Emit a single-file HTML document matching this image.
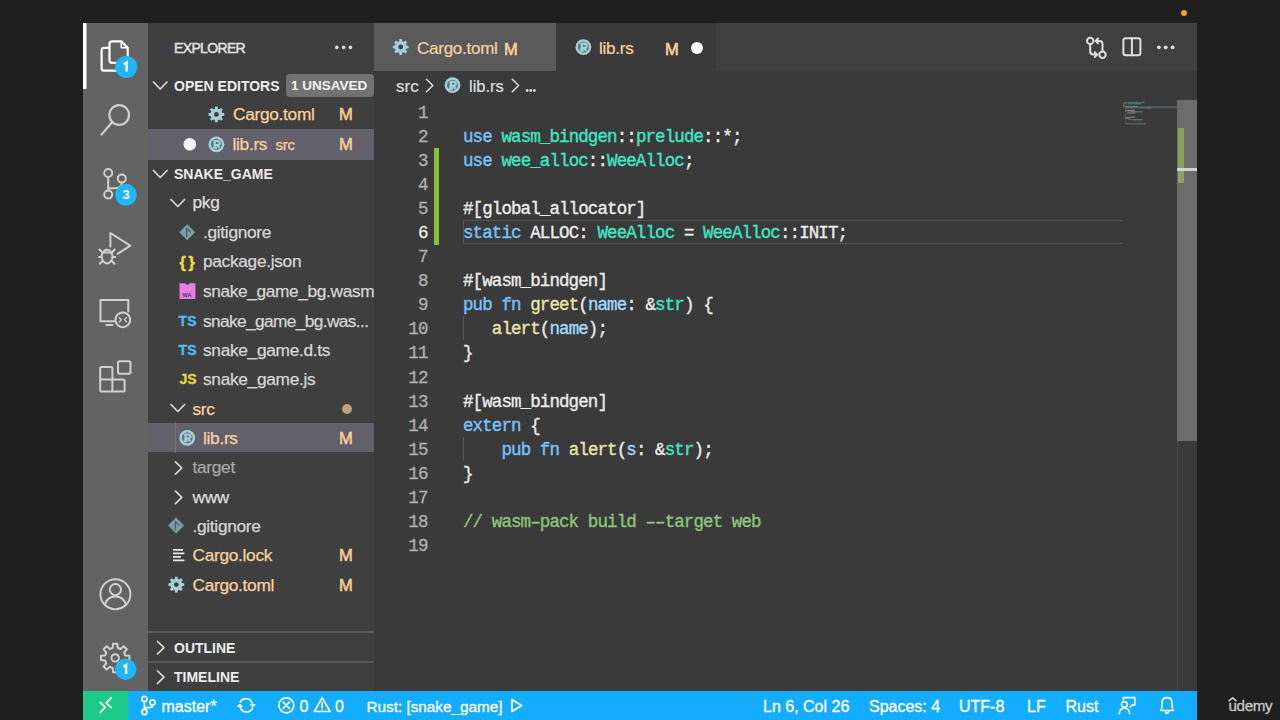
<!DOCTYPE html>
<html><head><meta charset="utf-8">
<style>
*{margin:0;padding:0;box-sizing:border-box}
html,body{width:1280px;height:720px;overflow:hidden;background:#1f1f1f;font-family:"Liberation Sans",sans-serif}
.a{position:absolute;white-space:pre}
.s{font-family:"Liberation Sans",sans-serif}
.m{font-family:"Liberation Mono",monospace}
#act{left:83px;top:23px;width:65px;height:668px;background:#636363}
#side{left:148px;top:23px;width:226px;height:668px;background:#3f3f3f}
#tabs{left:374px;top:23px;width:823px;height:48px;background:#404040}
#ed{left:374px;top:71px;width:823px;height:620px;background:#3a3a3a}
#status{left:83px;top:691px;width:1114px;height:29px;background:#14acfd}
.row{position:absolute;left:148px;width:226px;height:29.4px}
.lbl{position:absolute;font-size:17.3px;letter-spacing:-0.3px;line-height:29.4px;color:#d6d6d6;-webkit-text-stroke:0.25px currentColor;white-space:pre}
.mod{color:#f8d29c}
.M{position:absolute;left:339px;font-size:16.5px;line-height:29.4px;color:#f4cc94;-webkit-text-stroke:0.6px currentColor}
.hdr{position:absolute;font-size:14px;font-weight:700;color:#ececec;line-height:29.4px;white-space:pre;margin-top:1px}
.code{position:absolute;left:463px;font-family:"Liberation Mono",monospace;font-size:17.5px;letter-spacing:-0.9px;-webkit-text-stroke:0.35px currentColor;line-height:24px;color:#ececec;white-space:pre}
.ln{position:absolute;left:380px;width:47.5px;text-align:right;font-family:"Liberation Mono",monospace;font-size:17.5px;letter-spacing:-0.9px;-webkit-text-stroke:0.3px currentColor;line-height:24px;color:#b0b0b0;white-space:pre}
.k{color:#78c4fc}.t{color:#40e6c4}.f{color:#ebe4a6}.p{color:#a0dcff}.c{color:#8fc47c}
.st{position:absolute;top:692px;font-size:16px;line-height:29px;color:#fff;-webkit-text-stroke:0.3px currentColor;white-space:pre}
</style></head><body>
<!-- orange dot -->
<div class="a" style="left:1181px;top:10px;width:6.4px;height:6.4px;border-radius:50%;background:#f7a21b"></div>

<div id="act" class="a"></div>
<div id="side" class="a"></div>
<div id="tabs" class="a"></div>
<div id="ed" class="a"></div>
<div id="status" class="a"></div>

<!-- SIDEBAR -->
<div class="a" style="left:174px;top:23.5px;font-size:14px;letter-spacing:-0.65px;line-height:48px;color:#e2e2e2;-webkit-text-stroke:0.45px currentColor">EXPLORER</div>
<div class="a" style="left:148px;top:129.2px;width:226px;height:30.6px;background:#62606b"></div>
<div class="a" style="left:148px;top:423px;width:226px;height:29.4px;background:#62606b"></div>
<div class="hdr" style="left:174px;top:71px">OPEN EDITORS</div>
<div class="a" style="left:286px;top:73.5px;width:87.5px;height:23px;border-radius:4px;background:#727272"></div>
<div class="a" style="left:291px;top:73.5px;font-size:13.5px;font-weight:700;line-height:23px;color:#f2f2f2">1 UNSAVED</div>
<div class="lbl mod" style="left:233px;top:100.3px">Cargo.toml</div>
<div class="M" style="top:100.3px">M</div>
<div class="lbl mod" style="left:232.5px;top:129.7px">lib.rs</div>
<div class="lbl mod" style="left:275.5px;top:129.7px;font-size:15px">src</div>
<div class="M" style="top:129.7px">M</div>
<div class="hdr" style="left:174px;top:159px">SNAKE_GAME</div>
<div class="lbl" style="left:192.5px;top:188.3px;color:#dedede">pkg</div>
<div class="lbl" style="left:203px;top:217.7px">.gitignore</div>
<div class="lbl" style="left:203px;top:247px">package.json</div>
<div class="lbl" style="left:203px;top:277.2px;letter-spacing:-0.36px">snake_game_bg.wasm</div>
<div class="lbl" style="left:203px;top:306.6px;letter-spacing:-0.62px">snake_game_bg.was...</div>
<div class="lbl" style="left:203px;top:335.9px">snake_game.d.ts</div>
<div class="lbl" style="left:203px;top:365.2px">snake_game.js</div>
<div class="lbl mod" style="left:192.5px;top:394.6px">src</div>
<div class="a" style="left:341.5px;top:404px;width:10px;height:10px;border-radius:50%;background:#bea27e"></div>
<div class="lbl mod" style="left:203px;top:423.9px">lib.rs</div>
<div class="M" style="top:423.9px">M</div>
<div class="lbl" style="left:192.5px;top:453.2px;color:#a8a8a8">target</div>
<div class="lbl" style="left:192.5px;top:482.6px;color:#dedede">www</div>
<div class="lbl" style="left:192.5px;top:511.9px">.gitignore</div>
<div class="lbl mod" style="left:192.5px;top:541.2px">Cargo.lock</div>
<div class="M" style="top:541.2px">M</div>
<div class="lbl mod" style="left:192.5px;top:570.6px">Cargo.toml</div>
<div class="M" style="top:570.6px">M</div>
<div class="a" style="left:148px;top:631px;width:226px;height:2px;background:#585858"></div>
<div class="a" style="left:148px;top:660.5px;width:226px;height:2px;background:#585858"></div>
<div class="hdr" style="left:174px;top:632.5px">OUTLINE</div>
<div class="hdr" style="left:174px;top:662px">TIMELINE</div>

<!-- TABS -->
<div class="a" style="left:374px;top:23px;width:182px;height:48px;background:#5a5a5a"></div>
<div class="a" style="left:556px;top:23px;width:160px;height:48px;background:#3a3a3a"></div>
<div class="a mod" style="left:417px;top:24.6px;font-size:17px;letter-spacing:-0.25px;line-height:48px;-webkit-text-stroke:0.2px currentColor">Cargo.toml</div>
<div class="a mod" style="left:504px;top:24.6px;font-size:16.5px;line-height:48px;-webkit-text-stroke:0.6px currentColor">M</div>
<div class="a mod" style="left:599px;top:24.6px;font-size:17px;letter-spacing:-0.25px;line-height:48px;-webkit-text-stroke:0.2px currentColor">lib.rs</div>
<div class="a mod" style="left:665px;top:24.6px;font-size:16.5px;line-height:48px;-webkit-text-stroke:0.6px currentColor">M</div>
<div class="a" style="left:691px;top:41.5px;width:12px;height:12px;border-radius:50%;background:#fff"></div>

<!-- BREADCRUMB -->
<div class="a" style="left:396px;top:72px;font-size:17px;line-height:29px;color:#dedede;-webkit-text-stroke:0.2px currentColor">src</div>
<div class="a" style="left:469px;top:72px;font-size:16.5px;line-height:29px;color:#dedede;-webkit-text-stroke:0.2px currentColor">lib.rs</div>

<!-- EDITOR -->
<div class="a" style="left:463px;top:220px;width:659px;height:24px;border:1px solid #565656;border-right:none"></div>
<div class="a" style="left:434px;top:148px;width:4.7px;height:96.5px;background:#86c232"></div>
<div class="a" style="left:462.5px;top:316.4px;width:1px;height:24px;background:#585858"></div>
<div class="a" style="left:462.5px;top:436.8px;width:1px;height:24px;background:#585858"></div>
<div class="ln" style="top:100.55px">1</div>
<div class="ln" style="top:124.64px">2</div>
<div class="ln" style="top:148.73px">3</div>
<div class="ln" style="top:172.82px">4</div>
<div class="ln" style="top:196.91px">5</div>
<div class="ln" style="top:221.00px;color:#ececec">6</div>
<div class="ln" style="top:245.09px">7</div>
<div class="ln" style="top:269.18px">8</div>
<div class="ln" style="top:293.27px">9</div>
<div class="ln" style="top:317.36px">10</div>
<div class="ln" style="top:341.45px">11</div>
<div class="ln" style="top:365.54px">12</div>
<div class="ln" style="top:389.63px">13</div>
<div class="ln" style="top:413.72px">14</div>
<div class="ln" style="top:437.81px">15</div>
<div class="ln" style="top:461.90px">16</div>
<div class="ln" style="top:485.99px">17</div>
<div class="ln" style="top:510.08px">18</div>
<div class="ln" style="top:534.17px">19</div>
<div class="code" style="top:124.64px"><span class="k">use</span> <span class="t">wasm_bindgen</span>::<span class="t">prelude</span>::*;</div>
<div class="code" style="top:148.73px"><span class="k">use</span> <span class="t">wee_alloc</span>::<span class="t">WeeAlloc</span>;</div>
<div class="code" style="top:196.91px">#[global_allocator]</div>
<div class="code" style="top:221.00px"><span class="k">static</span> ALLOC: <span class="t">WeeAlloc</span> = <span class="t">WeeAlloc</span>::INIT;</div>
<div class="code" style="top:269.18px">#[wasm_bindgen]</div>
<div class="code" style="top:293.27px"><span class="k">pub</span> <span class="k">fn</span> <span class="f">greet</span>(<span class="p">name</span>: &amp;<span class="t">str</span>) {</div>
<div class="code" style="top:317.36px">   <span class="f">alert</span>(<span class="p">name</span>);</div>
<div class="code" style="top:341.45px">}</div>
<div class="code" style="top:389.63px">#[wasm_bindgen]</div>
<div class="code" style="top:413.72px"><span class="k">extern</span> {</div>
<div class="code" style="top:437.81px">    <span class="k">pub</span> <span class="k">fn</span> <span class="f">alert</span>(<span class="p">s</span>: &amp;<span class="t">str</span>);</div>
<div class="code" style="top:461.90px">}</div>
<div class="code c" style="top:510.08px">// wasm–pack build ––target web</div>

<!-- ICONS -->
<svg class="a" style="left:0;top:0" width="1280" height="720" viewBox="0 0 1280 720" fill="none" stroke-linecap="round" stroke-linejoin="round">
 <!-- active indicator -->
 <rect x="83" y="23" width="3.5" height="66" fill="#fff" stroke="none"/>
 <!-- explorer files -->
 <g stroke="#fff" stroke-width="2.2">
  <path d="M108.5 47.9 H104 Q101.6 47.9 101.6 50.3 V68.2 Q101.6 70.6 104 70.6 H117"/>
  <path d="M109.5 58 V44 Q109.5 41.4 112 41.4 H121.3 L127.7 47.8 V58 M109.5 58 V60.3 Q109.5 62.8 112 62.8 H116"/>
  <path d="M121.3 41.4 V47.8 H127.7" stroke-width="1.6"/>
 </g>
 <circle cx="126.3" cy="67" r="11" fill="#20b6f9"/>
 <!-- search -->
 <g stroke="#d0d0d0" stroke-width="2.2">
  <circle cx="119.2" cy="115" r="9.8"/>
  <path d="M112 122.3 L101.5 134.6"/>
 </g>
 <!-- scm -->
 <g stroke="#d0d0d0" stroke-width="2">
  <circle cx="108.2" cy="173" r="4"/>
  <circle cx="121.8" cy="178.6" r="4"/>
  <circle cx="108.2" cy="194.6" r="4"/>
  <path d="M108.2 177 V190.6 M121.8 182.6 Q121.8 188.2 115.5 188.2 H108.2"/>
 </g>
 <circle cx="126" cy="194.8" r="10.8" fill="#20b6f9"/>
 <path d="M123.8 64.4 L126.6 62.5 V71.4" stroke="#fff" stroke-width="2.4" stroke-linecap="butt" stroke-linejoin="miter"/>
 <!-- debug -->
 <g stroke="#d0d0d0" stroke-width="2">
  <path d="M110.4 246.4 V233 L130.3 245.6 L117.6 253.8"/>
  <ellipse cx="107.1" cy="256.6" rx="5.4" ry="6.8"/>
  <path d="M101.8 252.6 H112.4 M99.5 249.5 L102 252 M114.7 249.5 L112.2 252 M99 257 H101.7 M112.5 257 H115.2 M99.8 263.8 L102.3 261.2 M114.4 263.8 L111.9 261.2"/>
 </g>
 <!-- remote -->
 <g stroke="#d0d0d0" stroke-width="2">
  <path d="M115.5 321.3 H100.5 V300 H128.3 V311.5"/>
  <path d="M106.2 325 H112.4"/>
  <circle cx="122.8" cy="319.8" r="7.4"/>
  <path d="M119.2 317.6 L121.4 319.8 L119.2 322 M126.6 317.4 L124.4 319.6 L126.6 321.8" stroke-width="1.3"/>
 </g>
 <!-- extensions -->
 <g stroke="#d0d0d0" stroke-width="2">
  <rect x="118" y="361.2" width="12.5" height="12.5" rx="1.8"/>
  <path d="M101.8 367 H110.8 Q112.4 367 112.4 368.6 V379.5 H123 Q124.6 379.5 124.6 381.1 V390 Q124.6 391.6 123 391.6 H101.8 Q100.2 391.6 100.2 390 V368.6 Q100.2 367 101.8 367 Z M100.2 379.5 H112.4 V391.6"/>
 </g>
 <!-- accounts -->
 <g stroke="#d0d0d0" stroke-width="2">
  <circle cx="115.4" cy="594.2" r="15"/>
  <circle cx="115.4" cy="589.6" r="5.6"/>
  <path d="M104.8 604.8 C106.5 599 110.5 596.5 115.4 596.5 C120.3 596.5 124.3 599 126 604.8"/>
 </g>
 <!-- settings gear -->
 <g stroke="#d0d0d0" stroke-width="2">
  <path id="gear" d="M112.68 647.81 L113.07 643.66 L117.33 643.66 L117.72 647.81 L120.56 648.99 L123.77 646.32 L126.78 649.33 L124.11 652.54 L125.29 655.38 L129.44 655.77 L129.44 660.03 L125.29 660.42 L124.11 663.26 L126.78 666.47 L123.77 669.48 L120.56 666.81 L117.72 667.99 L117.33 672.14 L113.07 672.14 L112.68 667.99 L109.84 666.81 L106.63 669.48 L103.62 666.47 L106.29 663.26 L105.11 660.42 L100.96 660.03 L100.96 655.77 L105.11 655.38 L106.29 652.54 L103.62 649.33 L106.63 646.32 L109.84 648.99 Z"/>
  <circle cx="115.2" cy="657.9" r="3.7"/>
 </g>
 <circle cx="125.8" cy="669.3" r="10.6" fill="#20b6f9"/>
 <path d="M123.3 666.8 L126.1 664.9 V673.8" stroke="#fff" stroke-width="2.4" stroke-linecap="butt" stroke-linejoin="miter"/>

 <!-- sidebar: explorer dots -->
 <g fill="#dcdcdc" stroke="none">
  <circle cx="336.8" cy="47.4" r="1.8"/><circle cx="343.6" cy="47.4" r="1.8"/><circle cx="350.4" cy="47.4" r="1.8"/>
 </g>
 <!-- chevrons -->
 <g stroke="#d8d8d8" stroke-width="1.7">
  <path d="M153.5 82 L160.2 89 L167 82"/>
  <path d="M153.5 170.5 L160.2 177.5 L167 170.5"/>
  <path d="M171 199.5 L177.8 206.5 L184.6 199.5"/>
  <path d="M171 404.5 L177.8 411.5 L184.6 404.5"/>
  <path d="M175.5 461.8 L181.8 468 L175.5 474.2"/>
  <path d="M175.5 491.2 L181.8 497.4 L175.5 503.6"/>
  <path d="M157.5 641.5 L164 647.7 L157.5 653.9"/>
  <path d="M157.5 671 L164 677.2 L157.5 683.4"/>
 </g>
 <!-- open editor dot -->
 <circle cx="189.8" cy="144.3" r="6.3" fill="#f4f4f4" stroke="none"/>
 <!-- gear icons (Cargo.toml) -->
 <defs>
  
  <g id="cog2">
   <path d="M-1.53 -5.70 L-1.25 -7.90 L1.25 -7.90 L1.53 -5.70 L2.95 -5.11 L4.70 -6.47 L6.47 -4.70 L5.11 -2.95 L5.70 -1.53 L7.90 -1.25 L7.90 1.25 L5.70 1.53 L5.11 2.95 L6.47 4.70 L4.70 6.47 L2.95 5.11 L1.53 5.70 L1.25 7.90 L-1.25 7.90 L-1.53 5.70 L-2.95 5.11 L-4.70 6.47 L-6.47 4.70 L-5.11 2.95 L-5.70 1.53 L-7.90 1.25 L-7.90 -1.25 L-5.70 -1.53 L-5.11 -2.95 L-6.47 -4.70 L-4.70 -6.47 L-2.95 -5.11 Z" fill="#a4d0da" stroke="none"/>
   <circle r="2.4" fill="#3f3f3f" stroke="none"/>
  </g>
  <g id="rust">
   <circle r="7.9" fill="#a4d0da" stroke="none"/>
   <circle r="5.5" fill="#5c7880" stroke="none"/>
   <path d="M-2.9 -3.3 H1.2 Q3.3 -3.3 3.3 -1.2 Q3.3 0.7 1.2 0.7 H-2.9 M-1.6 -3.3 V3.6 M0.6 0.7 L3 3.6 M-3.6 3.4 H0.4" fill="none" stroke="#a4d0da" stroke-width="2.1" stroke-linecap="butt"/>
  </g>
 </defs>
 <use href="#cog2" x="216.4" y="114.4"/>
 <use href="#cog2" x="400.7" y="47"/>
 <use href="#cog2" x="176.3" y="584.6"/>
 <use href="#rust" x="216.4" y="144.3"/>
 <use href="#rust" x="583.4" y="47.2"/>
 <use href="#rust" x="452.5" y="85.2"/>
 <use href="#rust" x="187.2" y="437.8"/>
 <!-- gitignore diamonds -->
 <g fill="#7a9da6" stroke="none">
  <path d="M187.2 224.2 L195.2 232.2 L187.2 240.2 L179.2 232.2 Z"/>
  <path d="M176 517.6 L184 525.6 L176 533.6 L168 525.6 Z"/>
 </g>
 <g stroke="#4a626a" stroke-width="1.4">
  <path d="M186.6 228.2 L190.2 231.8 M186.6 229 V236.2"/>
  <path d="M175.4 521.6 L179 525.2 M175.4 522.4 V529.6"/>
 </g>
 <!-- package.json braces -->
 <text x="179.4" y="267.8" font-family="Liberation Sans" font-size="16" font-weight="700" letter-spacing="-0.8" fill="#ecdc3c" stroke="#ecdc3c" stroke-width="0.5">{ }</text>
 <!-- wasm icon -->
 <path d="M179.5 283.2 H185 Q187.2 286.2 189.6 283.2 H195.4 V299 H179.5 Z" fill="#e77de0" stroke="none"/>
 <text x="182.5" y="296.8" font-family="Liberation Sans" font-size="5.5" font-weight="700" fill="#5a2d6a" stroke="none">WA</text>
 <!-- TS / JS -->
 <text x="178.6" y="325.6" font-family="Liberation Sans" font-size="14" font-weight="700" fill="#4fbdf0" stroke="#4fbdf0" stroke-width="0.3">TS</text>
 <text x="178.6" y="355" font-family="Liberation Sans" font-size="14" font-weight="700" fill="#4fbdf0" stroke="#4fbdf0" stroke-width="0.3">TS</text>
 <text x="179.4" y="384.3" font-family="Liberation Sans" font-size="14" font-weight="700" fill="#e6d43c" stroke="#e6d43c" stroke-width="0.3">JS</text>
 <!-- indent guide src -->
 <path d="M175.2 423 V452.4" stroke="#7a7a7a" stroke-width="1"/>
 <!-- cargo.lock lines -->
 <g stroke="#e8e8e8" stroke-width="1.7" stroke-linecap="butt">
  <path d="M173 549.8 H183 M173 553.3 H184.4 M173 556.8 H181 M173 560.3 H184.4"/>
 </g>

 <!-- minimap -->
 <g stroke="none" opacity="0.42">
  <rect x="1125.20" y="101.93" width="1.98" height="1.1" fill="#78c4fc"/>
  <rect x="1127.84" y="101.93" width="7.92" height="1.1" fill="#40e6c4"/>
  <rect x="1135.76" y="101.93" width="1.32" height="1.1" fill="#e4e4e4"/>
  <rect x="1137.08" y="101.93" width="4.62" height="1.1" fill="#40e6c4"/>
  <rect x="1141.70" y="101.93" width="2.64" height="1.1" fill="#e4e4e4"/>
  <rect x="1125.20" y="103.26" width="1.98" height="1.1" fill="#78c4fc"/>
  <rect x="1127.84" y="103.26" width="5.94" height="1.1" fill="#40e6c4"/>
  <rect x="1133.78" y="103.26" width="1.32" height="1.1" fill="#e4e4e4"/>
  <rect x="1135.10" y="103.26" width="5.28" height="1.1" fill="#40e6c4"/>
  <rect x="1140.38" y="103.26" width="0.66" height="1.1" fill="#e4e4e4"/>
  <rect x="1125.20" y="105.92" width="12.54" height="1.1" fill="#e4e4e4"/>
  <rect x="1125.20" y="107.25" width="3.96" height="1.1" fill="#78c4fc"/>
  <rect x="1129.82" y="107.25" width="3.96" height="1.1" fill="#e4e4e4"/>
  <rect x="1134.44" y="107.25" width="5.28" height="1.1" fill="#40e6c4"/>
  <rect x="1140.38" y="107.25" width="0.66" height="1.1" fill="#e4e4e4"/>
  <rect x="1141.70" y="107.25" width="5.28" height="1.1" fill="#40e6c4"/>
  <rect x="1146.98" y="107.25" width="4.62" height="1.1" fill="#e4e4e4"/>
  <rect x="1125.20" y="109.91" width="9.90" height="1.1" fill="#e4e4e4"/>
  <rect x="1125.20" y="111.24" width="1.98" height="1.1" fill="#78c4fc"/>
  <rect x="1127.84" y="111.24" width="1.32" height="1.1" fill="#78c4fc"/>
  <rect x="1129.82" y="111.24" width="3.30" height="1.1" fill="#ebe4a6"/>
  <rect x="1133.12" y="111.24" width="0.66" height="1.1" fill="#e4e4e4"/>
  <rect x="1133.78" y="111.24" width="2.64" height="1.1" fill="#a0dcff"/>
  <rect x="1136.42" y="111.24" width="1.98" height="1.1" fill="#e4e4e4"/>
  <rect x="1138.40" y="111.24" width="1.98" height="1.1" fill="#40e6c4"/>
  <rect x="1140.38" y="111.24" width="1.98" height="1.1" fill="#e4e4e4"/>
  <rect x="1127.18" y="112.57" width="3.30" height="1.1" fill="#ebe4a6"/>
  <rect x="1130.48" y="112.57" width="0.66" height="1.1" fill="#e4e4e4"/>
  <rect x="1131.14" y="112.57" width="2.64" height="1.1" fill="#a0dcff"/>
  <rect x="1133.78" y="112.57" width="1.32" height="1.1" fill="#e4e4e4"/>
  <rect x="1125.20" y="113.90" width="0.66" height="1.1" fill="#e4e4e4"/>
  <rect x="1125.20" y="116.56" width="9.90" height="1.1" fill="#e4e4e4"/>
  <rect x="1125.20" y="117.89" width="3.96" height="1.1" fill="#78c4fc"/>
  <rect x="1129.82" y="117.89" width="0.66" height="1.1" fill="#e4e4e4"/>
  <rect x="1127.84" y="119.22" width="1.98" height="1.1" fill="#78c4fc"/>
  <rect x="1130.48" y="119.22" width="1.32" height="1.1" fill="#78c4fc"/>
  <rect x="1132.46" y="119.22" width="3.30" height="1.1" fill="#ebe4a6"/>
  <rect x="1135.76" y="119.22" width="0.66" height="1.1" fill="#e4e4e4"/>
  <rect x="1136.42" y="119.22" width="0.66" height="1.1" fill="#a0dcff"/>
  <rect x="1137.08" y="119.22" width="1.98" height="1.1" fill="#e4e4e4"/>
  <rect x="1139.06" y="119.22" width="1.98" height="1.1" fill="#40e6c4"/>
  <rect x="1141.04" y="119.22" width="1.32" height="1.1" fill="#e4e4e4"/>
  <rect x="1125.20" y="120.55" width="0.66" height="1.1" fill="#e4e4e4"/>
  <rect x="1125.20" y="123.21" width="20.46" height="1.1" fill="#8fc47c"/>
 </g>
 <rect x="1123" y="102.2" width="1.4" height="5.6" fill="#86c232" opacity="0.45" stroke="none"/>
 <rect x="1125.2" y="106.4" width="52" height="1.4" fill="#5b6d80" opacity="0.85" stroke="none"/>
 <!-- tab bar actions -->
 <g stroke="#e0e0e0" stroke-width="2">
  <circle cx="1090.2" cy="40.9" r="3.2"/>
  <circle cx="1102.5" cy="54.8" r="3.2"/>
  <path d="M1090.2 44.1 V51.5 Q1090.2 54.6 1093.3 54.6 H1097 M1094.8 52.2 L1097.2 54.6 L1094.8 57"/>
  <path d="M1102.5 51.6 V44 Q1102.5 40.9 1099.4 40.9 H1095.8 M1098 38.5 L1095.6 40.9 L1098 43.3"/>
  <rect x="1123.4" y="38.3" width="17" height="17" rx="2.2"/>
  <path d="M1131.9 38.3 V55.3"/>
 </g>
 <g fill="#e0e0e0" stroke="none">
  <circle cx="1158.9" cy="47.3" r="1.9"/><circle cx="1165.7" cy="47.3" r="1.9"/><circle cx="1172.6" cy="47.3" r="1.9"/>
 </g>
 <!-- breadcrumbs chevrons -->
 <g stroke="#d8d8d8" stroke-width="1.6">
  <path d="M426.5 79.3 L432.8 85.5 L426.5 91.7"/>
  <path d="M512.3 79.3 L518.6 85.5 L512.3 91.7"/>
 </g>
 <g fill="#d8d8d8" stroke="none">
  <circle cx="527.2" cy="90.5" r="1.4"/><circle cx="530.8" cy="90.5" r="1.4"/><circle cx="534.4" cy="90.5" r="1.4"/>
 </g>

 <!-- status bar -->
 <rect x="83" y="691" width="45.4" height="29" fill="#1dca8a" stroke="none"/>
 <g stroke="#fff" stroke-width="1.7">
  <path d="M100.3 702.3 L105.3 707.3 L100.3 712.3"/>
  <path d="M111.2 697.9 L106.3 702.8 L111.2 707.7"/>
 </g>
 <g stroke="#fff" stroke-width="1.7">
  <circle cx="144.4" cy="698.9" r="2.6"/>
  <circle cx="144.4" cy="712" r="2.6"/>
  <circle cx="152.5" cy="702.6" r="2.6"/>
  <path d="M144.4 701.5 V709.4 M152.5 705.2 Q152.5 707.6 149.5 707.6 H144.6"/>
  <path d="M240.3 702 A6.6 6.6 0 0 1 252.4 703.6 M252.4 708.4 A6.6 6.6 0 0 1 240.1 706.8"/>
  <circle cx="286.3" cy="705.3" r="7.5"/>
  <path d="M283.2 702.2 L289.4 708.4 M289.4 702.2 L283.2 708.4"/>
  <path d="M322.2 697.6 L330 711.5 H314.4 Z"/>
  <path d="M322.2 702.5 V707.2 M322.2 709.3 V709.5"/>
  <path d="M512 699.5 L521.5 705.5 L512 711.5 Z"/>
 </g>
 <g fill="#fff" stroke="none">
  <path d="M249.6 704.2 H256 L252.8 707.6 Z"/>
  <path d="M236.6 706.8 H243 L239.8 703.4 Z"/>
 </g>
 <!-- feedback + bell -->
 <g stroke="#fff" stroke-width="1.6">
  <path d="M1123.3 699.6 V697.6 H1134.8 V705 H1132.2 L1130.2 707"/>
  <circle cx="1124.4" cy="704.5" r="2.9"/>
  <path d="M1119.2 713.6 Q1119.5 708.2 1124.4 708.2 Q1129.3 708.2 1129.6 713.6"/>
  <path d="M1160.8 710.5 Q1162.1 708.5 1162.1 704.5 V702.6 Q1162.1 697.6 1167 697.6 Q1171.9 697.6 1171.9 702.6 V704.5 Q1171.9 708.5 1173.2 710.5 Z"/>
  <path d="M1165.4 711.8 A1.6 1.6 0 0 0 1168.6 711.8"/>
 </g>
</svg>
<div class="a" style="left:115px;top:183.8px;width:22px;line-height:22px;text-align:center;font-size:13px;font-weight:700;color:#fff">3</div>

<!-- STATUS TEXT -->
<div class="st" style="left:161.5px">master*</div>
<div class="st" style="left:299.5px">0</div>
<div class="st" style="left:335px">0</div>
<div class="st" style="left:366.5px;font-size:15.3px">Rust: [snake_game]</div>
<div class="st" style="left:763px">Ln 6, Col 26</div>
<div class="st" style="left:869px">Spaces: 4</div>
<div class="st" style="left:959px">UTF-8</div>
<div class="st" style="left:1027px">LF</div>
<div class="st" style="left:1065.5px">Rust</div>
<div class="a" style="left:1228.5px;top:690.5px;font-size:15.2px;letter-spacing:-0.35px;line-height:29px;color:#c8c8c8;-webkit-text-stroke:0.3px currentColor">udemy</div>
<svg class="a" style="left:1225.6px;top:694.8px" width="14" height="10" viewBox="0 0 14 10"><path d="M3.2 5.6 L6.6 2.8 L10 5.6" fill="none" stroke="#c8c8c8" stroke-width="1.8" stroke-linecap="round"/></svg>

<!-- scrollbar / minimap -->
<div class="a" style="left:1177px;top:99.5px;width:1px;height:591.5px;background:#454545"></div>
<div class="a" style="left:1177px;top:99.5px;width:20px;height:341px;background:#6c6c6c"></div>
<div class="a" style="left:1177.5px;top:127.5px;width:6.5px;height:55.5px;background:#8ba35e"></div>
<div class="a" style="left:1177px;top:168px;width:20px;height:2.5px;background:#d2d2d2"></div>

</body></html>
